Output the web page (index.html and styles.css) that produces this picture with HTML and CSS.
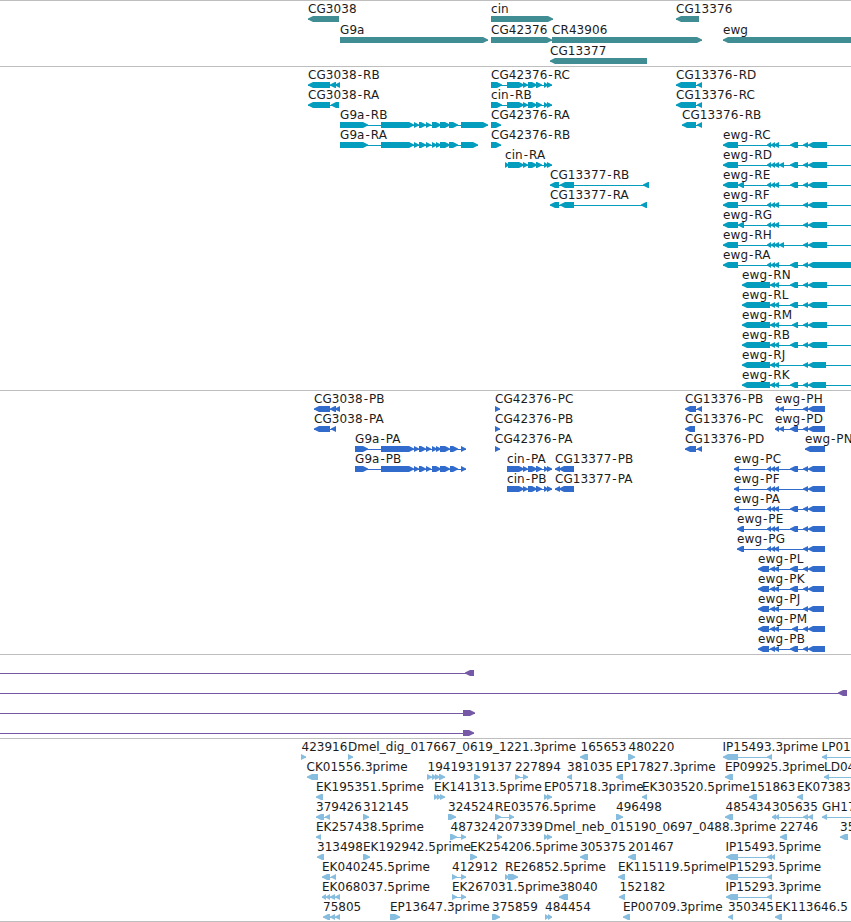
FILE: index.html
```html
<!DOCTYPE html>
<html lang="en">
<head>
<meta charset="utf-8">
<title>Genome browser</title>
<link rel="stylesheet" href="styles.css">
</head>
<body>
<main class="browser">
  <section class="track track-genes" id="genes"></section>
  <section class="track track-transcripts" id="transcripts"></section>
  <section class="track track-proteins" id="proteins"></section>
  <section class="track track-spans" id="spans"></section>
  <section class="track track-insertions" id="insertions"></section>
</main>
<script src="tracks.js"></script>
</body>
</html>
```
FILE: styles.css
```css
body {
  margin: 0;
  background: #fff;
}

.browser {
  display: flex;
  flex-direction: column;
  width: 851px;
  height: 922px;
  box-sizing: border-box;
  border-bottom: 1px solid #bebebe;
  overflow: hidden;
}

.track {
  flex: none;
  box-sizing: border-box;
  border-top: 1px solid #bebebe;
  overflow: hidden;
}

.track-genes { height: 66px; color: #408e93; }
.track-transcripts { height: 324px; color: #049dbe; }
.track-proteins { height: 264px; color: #316ccc; }
.track-spans { height: 84px; color: #7558a6; }
.track-insertions { height: 183px; color: #87bdde; }

.lane {
  display: block;
  width: 851px;
  height: 100%;
}

.shape {
  fill: currentColor;
}

.name {
  fill: #1c1c1c;
  font-family: "DejaVu Sans", sans-serif;
  font-size: 12px;
  letter-spacing: 0.08px;
}

.track-insertions .name {
  letter-spacing: 0.02px;
}
```
FILE: tracks.js
```js
// Each feature: row | label | label x | strand | exon ranges | optional line start-end
const CIN = '523-528 528-537 536-542 544-548 547-552';
const T3 = '767-771 771-775 774-779';
const T2 = '770-775 774-779';
const data = {
  genes: `0|CG3038|308|L|308-339
1|G9a|340|R|340-488
0|cin|491|R|491-553
1|CG42376|491|R|491-552
1|CR43906|552|R|552-702
2|CG13377|550|L|550-647
0|CG13376|676|L|676-699
1|ewg|723|L|723-860`,
  transcripts: `0|CG3038-RB|308|L|308-330 330-336 335-340
1|CG3038-RA|308|L|308-330 331-339
2|G9a-RB|340|R|340-368 381-414 414-419 419-426 426-431 432-441 440-450 449-458 461-488
3|G9a-RA|340|R|340-368 381-414 414-419 419-426 426-431 432-437 436-441 440-450 449-458 461-478
0|CG42376-RC|491|R|491-502 507-524 ${CIN}
1|cin-RB|491|R|491-502 507-524 ${CIN}
2|CG42376-RA|491|R|491-501
3|CG42376-RB|491|R|491-501
4|cin-RA|505|R|505-509 508-524 ${CIN}
5|CG13377-RB|550|L|550-559 560-574 643-649
6|CG13377-RA|550|L|550-559 560-574 641-647
0|CG13376-RD|676|L|676-696 697-702
1|CG13376-RC|676|L|676-696 697-702
2|CG13376-RB|682|L|682-696 697-702
3|ewg-RC|723|L|723-738 ${T3} 790-798 803-808 808-827|723-851
4|ewg-RD|723|L|723-738 ${T3} 779-784 790-798 803-808 808-827|723-851
5|ewg-RE|723|L|723-738 738-744 ${T3} 790-798 803-808 808-827|723-851
6|ewg-RF|723|L|723-738 ${T3} 803-808 808-827|723-851
7|ewg-RG|723|L|723-738 738-744 ${T3} 803-808 808-827|723-851
8|ewg-RH|723|L|723-738 ${T3} 779-784 803-808 808-827|723-851
9|ewg-RA|723|L|723-738 ${T3} 790-798 803-808 808-860|723-851
10|ewg-RN|742|L|742-770 ${T2} 790-798 803-808 808-827|742-851
11|ewg-RL|742|L|742-770 ${T2} 790-798 803-808 808-827|742-851
12|ewg-RM|742|L|742-770 ${T2} 792-798 803-808 808-827|742-851
13|ewg-RB|742|L|742-770 ${T2} 790-798 803-808 808-827|742-851
14|ewg-RJ|742|L|742-770 ${T2} 803-808 808-826|742-851
15|ewg-RK|742|L|742-770 ${T2} 790-798 803-808 808-826|742-851`,
  proteins: `0|CG3038-PB|314|L|314-330 330-336 335-340
1|CG3038-PA|314|L|314-330 331-336
2|G9a-PA|355|R|355-368 381-414 414-419 419-426 426-431 432-437 436-441 440-450 450-458 461-466
3|G9a-PB|355|R|355-368 381-414 414-419 419-426 426-431 432-441 440-450 450-458 461-466
0|CG42376-PC|495|R|495-500
1|CG42376-PB|495|R|495-500
2|CG42376-PA|495|R|495-500
3|cin-PA|507|R|507-524 ${CIN}
4|cin-PB|507|R|507-524 ${CIN}
3|CG13377-PB|555|L|555-560 559-574
4|CG13377-PA|555|L|555-560 559-574
0|CG13376-PB|685|L|685-696 697-702
1|CG13376-PC|685|L|685-695
2|CG13376-PD|685|L|685-696 697-702
0|ewg-PH|775|L|775-779 779-784 803-808 808-825
1|ewg-PD|775|L|775-779 779-784 790-798 803-808 808-825
2|ewg-PN|805|L|805-825
3|ewg-PC|734|L|734-739 ${T3} 790-798 803-808 808-825
4|ewg-PF|734|L|734-739 ${T3} 803-808 808-825
5|ewg-PA|734|L|734-739 ${T3} 790-798 803-808 808-825
6|ewg-PE|737|L|737-744 ${T3} 790-798 803-808 808-825
7|ewg-PG|737|L|737-744 ${T3} 803-808 808-825
8|ewg-PL|758|L|758-769 ${T2} 790-798 803-808 808-825
9|ewg-PK|758|L|758-769 ${T2} 790-798 803-808 808-824
10|ewg-PJ|758|L|758-769 ${T2} 803-808 808-824
11|ewg-PM|758|L|758-769 ${T2} 792-798 803-808 808-825
12|ewg-PB|758|L|758-769 ${T2} 790-798 803-808 808-825`,
  spans: `0||0|L|465-474|0-474
1||0|L|838-847|0-847
2||0|R|463-475|0-475
3||0|R|463-474|0-474`,
  insertions: `0|423916|301.5|R|301-306
0|Dmel_dig_017667_0619_1221.3prime|348|R|348-353
0|165653|580.5|L|580-588
0|480220|628.5|R|628-635
0|IP15493.3prime|722.5|L|723-738 767-772
0|LP01|821.5|L|822-827|822-851
1|CK01556.3prime|306.5|L|307-318
1|194193|427.5|R|427-432 432-436 435-440 439-445
1|19137|474|R|474-480
1|227894|515|R|515-520 523-528
1|381035|567|L|567-572
1|EP17827.3prime|616|L|616-623
1|EP09925.3prime|725|L|725-733
1|LD04|824|L|824-829|824-851
2|EK195351.5prime|316|L|316-323
2|EK141313.5prime|434|R|434-438 437-441 440-445
2|EP05718.3prime|544|R|544-548 547-552
2|EK303520.5prime|642|L|642-647
2|151863|749.5|L|749-757
2|EK07383|797|L|797-803
3|379426|316|L|316-324 325-330
3|312145|363|R|363-369
3|324524|448|R|448-456
3|RE03576.5prime|495|R|495-501 509-514
3|496498|616|R|616-623
3|485434|725.5|L|725-733
3|305635|772|L|772-776 775-779 803-808 808-813
3|GH17|822|L|822-827|822-851
4|EK257438.5prime|316|L|316-321
4|487324|450.5|R|450-457 461-466
4|207339|497|R|497-502
4|Dmel_neb_015190_0697_0488.3prime|544|R|544-548 547-552
4|22746|780|L|780-787
4|35|840|L|840-848
5|313498|317|L|317-324
5|EK192942.5prime|363|R|363-370
5|EK254206.5prime|470|R|470-477
5|305375|580|L|580-588
5|201467|628|L|628-636
5|IP15493.5prime|725.5|L|726-738 767-772 771-775
6|EK040245.5prime|322|L|322-330 331-336
6|412912|452|R|452-457 461-466
6|RE26852.5prime|505|R|505-509 508-518
6|EK115119.5prime|618|L|618-625
6|IP15293.5prime|725.5|L|726-738 767-772
7|EK068037.5prime|322|L|322-326 326-330 330-335 335-340
7|EK267031.5prime|452|R|452-457 461-466
7|38040|559.5|L|559-568
7|152182|619.5|L|619-625
7|IP15293.3prime|725.5|L|726-738 767-772
8|75805|323|L|323-330 330-335 335-340
8|EP13647.3prime|390|R|390-400
8|375859|492|R|492-500
8|484454|545|R|545-549 548-552
8|EP00709.3prime|623|L|623-630
8|350345|728|L|728-733
8|EK113646.5|775|L|775-782`
};

const NS = 'http://www.w3.org/2000/svg';
const add = (parent, tag, attrs) => {
  const el = document.createElementNS(NS, tag);
  for (const key in attrs) el.setAttribute(key, attrs[key]);
  return parent.appendChild(el);
};

// Bar that tapers to a point on its strand's side.
function arrow(a, b, y, strand) {
  const t = Math.min(b - a, 5);
  const s = strand === 'L' ? 1 : -1;
  const tip = strand === 'L' ? a : b;
  const back = strand === 'L' ? b : a;
  return [[back, y], [tip + s * t, y], [tip, y + 2.5], [tip, y + 3.5],
    [tip + s * t, y + 6], [back, y + 6]].map(p => p.join()).join(' ');
}

for (const id in data) {
  const svg = add(document.getElementById(id), 'svg', { class: 'lane' });
  const pitch = id === 'genes' ? 21 : 20;
  for (const line of data[id].split('\n')) {
    const [row, label, x, strand, ranges, span] = line.split('|');
    const exons = ranges.split(' ').map(r => r.split('-').map(Number));
    const [from, to] = span ? span.split('-').map(Number)
      : [exons[0][0], exons[exons.length - 1][1]];
    const top = 15 + row * pitch;
    add(svg, 'rect', { class: 'shape', x: from, y: top + 3, width: to - from, height: 1 });
    for (const [a, b] of exons) {
      add(svg, 'polygon', { class: 'shape', points: arrow(a, b, top, strand) });
    }
    if (label) {
      const text = add(svg, 'text', { class: 'name', x, y: top - 3 });
      text.textContent = label;
      // Extra room on both sides of the hyphen.
      const h = label.indexOf('-');
      if (h > 0) {
        text.setAttribute('dx', [...label].map((c, i) => i === h || i === h + 1 ? 0.9 : 0).join(' '));
      }
    }
  }
}
```
